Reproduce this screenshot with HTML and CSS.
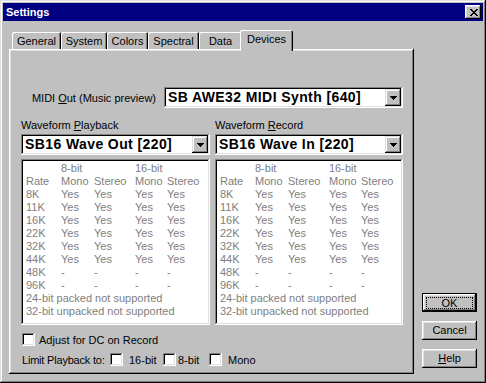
FILE: index.html
```html
<!DOCTYPE html>
<html>
<head>
<meta charset="utf-8">
<title>Settings</title>
<link rel="stylesheet" href="styles.css">
</head>
<body>
<div class="window">
  <div class="titlebar">
    <span class="title">Settings</span>
    <div class="close">
      <svg width="8" height="7" viewBox="0 0 8 7" shape-rendering="crispEdges"><path fill="#000" d="M0 0h2v1H0zM6 0h2v1H6zM1 1h2v1H1zM5 1h2v1H5zM2 2h4v1H2zM3 3h2v1H3zM2 4h4v1H2zM1 5h2v1H1zM5 5h2v1H5zM0 6h2v1H0zM6 6h2v1H6z"/></svg>
    </div>
  </div>
  <div class="content">
    <div class="tabs-area">
      <div class="tabstrip">
        <div class="tab w-general">General</div>
        <div class="tab w-system">System</div>
        <div class="tab w-colors">Colors</div>
        <div class="tab w-spectral">Spectral</div>
        <div class="tab w-data">Data</div>
        <div class="tab selected">Devices</div>
      </div>
      <div class="panel">
        <div class="midi-row">
          <span>MIDI <u>O</u>ut (Music preview)</span>
          <div class="combo midi-combo">
            <span class="combo-text">SB AWE32 MIDI Synth [640]</span>
            <span class="drop"><svg width="7" height="4" viewBox="0 0 7 4" shape-rendering="crispEdges"><path fill="#000" d="M0 0h7v1H0zM1 1h5v1H1zM2 2h3v1H2zM3 3h1v1H3z"/></svg></span>
          </div>
        </div>
        <div class="columns">
          <div class="col">
            <div class="col-label">Waveform <u>P</u>layback</div>
            <div class="combo">
              <span class="combo-text">SB16 Wave Out [220]</span>
              <span class="drop"><svg width="7" height="4" viewBox="0 0 7 4" shape-rendering="crispEdges"><path fill="#000" d="M0 0h7v1H0zM1 1h5v1H1zM2 2h3v1H2zM3 3h1v1H3z"/></svg></span>
            </div>
            <div class="caps">
              <span></span><span>8-bit</span><span></span><span>16-bit</span><span></span>
              <span>Rate</span><span>Mono</span><span>Stereo</span><span>Mono</span><span>Stereo</span>
              <span>8K</span><span>Yes</span><span>Yes</span><span>Yes</span><span>Yes</span>
              <span>11K</span><span>Yes</span><span>Yes</span><span>Yes</span><span>Yes</span>
              <span>16K</span><span>Yes</span><span>Yes</span><span>Yes</span><span>Yes</span>
              <span>22K</span><span>Yes</span><span>Yes</span><span>Yes</span><span>Yes</span>
              <span>32K</span><span>Yes</span><span>Yes</span><span>Yes</span><span>Yes</span>
              <span>44K</span><span>Yes</span><span>Yes</span><span>Yes</span><span>Yes</span>
              <span>48K</span><span>-</span><span>-</span><span>-</span><span>-</span>
              <span>96K</span><span>-</span><span>-</span><span>-</span><span>-</span>
              <span class="span-all">24-bit packed not supported</span>
              <span class="span-all">32-bit unpacked not supported</span>
            </div>
          </div>
          <div class="col">
            <div class="col-label">Waveform <u>R</u>ecord</div>
            <div class="combo">
              <span class="combo-text">SB16 Wave In [220]</span>
              <span class="drop"><svg width="7" height="4" viewBox="0 0 7 4" shape-rendering="crispEdges"><path fill="#000" d="M0 0h7v1H0zM1 1h5v1H1zM2 2h3v1H2zM3 3h1v1H3z"/></svg></span>
            </div>
            <div class="caps">
              <span></span><span>8-bit</span><span></span><span>16-bit</span><span></span>
              <span>Rate</span><span>Mono</span><span>Stereo</span><span>Mono</span><span>Stereo</span>
              <span>8K</span><span>Yes</span><span>Yes</span><span>Yes</span><span>Yes</span>
              <span>11K</span><span>Yes</span><span>Yes</span><span>Yes</span><span>Yes</span>
              <span>16K</span><span>Yes</span><span>Yes</span><span>Yes</span><span>Yes</span>
              <span>22K</span><span>Yes</span><span>Yes</span><span>Yes</span><span>Yes</span>
              <span>32K</span><span>Yes</span><span>Yes</span><span>Yes</span><span>Yes</span>
              <span>44K</span><span>Yes</span><span>Yes</span><span>Yes</span><span>Yes</span>
              <span>48K</span><span>-</span><span>-</span><span>-</span><span>-</span>
              <span>96K</span><span>-</span><span>-</span><span>-</span><span>-</span>
              <span class="span-all">24-bit packed not supported</span>
              <span class="span-all">32-bit unpacked not supported</span>
            </div>
          </div>
        </div>
        <div class="check-row first">
          <span class="checkbox"></span><span class="t-adjust">Adjust for DC on Record</span>
        </div>
        <div class="check-row second">
          <span class="t-limit">Limit Playback to:</span>
          <span class="checkbox"></span><span class="t-16">16-bit</span>
          <span class="checkbox"></span><span class="t-8">8-bit</span>
          <span class="checkbox"></span><span class="t-mono">Mono</span>
        </div>
      </div>
    </div>
    <div class="buttons">
      <div class="btn default"><span class="focus">OK</span></div>
      <div class="btn">Cancel</div>
      <div class="btn"><span><u>H</u>elp</span></div>
    </div>
  </div>
</div>
</body>
</html>
```
FILE: styles.css
```css
html, body {
  margin: 0;
  padding: 0;
  background: #c0c0c0;
}

.window {
  width: 486px;
  height: 383px;
  box-sizing: border-box;
  padding: 3px;
  background: #c0c0c0;
  box-shadow: inset -1px -1px #000, inset 1px 1px #dfdfdf, inset -2px -2px #808080, inset 2px 2px #fff;
  font-family: "Liberation Sans", Arial, sans-serif;
  font-size: 11px;
  color: #000;
  overflow: hidden;
}

.titlebar {
  height: 18px;
  background: #000080;
  display: flex;
  align-items: center;
  justify-content: space-between;
  padding: 0 2px 0 3px;
}

.title {
  color: #fff;
  font-weight: bold;
  font-size: 11px;
  line-height: 13px;
}

.close {
  width: 16px;
  height: 14px;
  box-sizing: border-box;
  background: #c0c0c0;
  box-shadow: inset -1px -1px #000, inset 1px 1px #fff, inset -2px -2px #808080, inset 2px 2px #dfdfdf;
  display: flex;
  align-items: center;
  justify-content: center;
  padding-left: 1px;
}

.close svg, .drop svg {
  display: block;
}

.content {
  display: flex;
  margin-top: 9px;
  padding-left: 6px;
}

.tabstrip {
  display: flex;
  align-items: flex-end;
  height: 19px;
  padding-left: 3px;
}

.tab {
  box-sizing: border-box;
  height: 17px;
  padding-top: 2px;
  line-height: 14px;
  text-align: center;
  white-space: nowrap;
  background: #c0c0c0;
  border-radius: 2px 2px 0 0;
  box-shadow: inset 1px 1px #fff, inset -1px 0 #000, inset -2px 0 #808080;
}

.w-general { width: 49px; }
.w-system { width: 46px; }
.w-colors { width: 41px; }
.w-spectral { width: 51px; }
.w-data { width: 43px; }

.tab.selected {
  width: 53px;
  height: 21px;
  margin: 0 -2px -2px -2px;
  position: relative;
  z-index: 1;
}

.panel {
  width: 405px;
  height: 325px;
  box-sizing: border-box;
  padding: 38px 11px 0 12px;
  box-shadow: inset -1px -1px #000, inset 1px 1px #fff, inset -2px -2px #808080, inset 2px 2px #dfdfdf;
}

.midi-row {
  display: flex;
  justify-content: flex-end;
  align-items: center;
  gap: 8px;
  height: 21px;
}

.midi-combo {
  width: 239px;
}

.columns {
  display: grid;
  grid-template-columns: 189px 188px;
  column-gap: 5px;
  margin-top: 11px;
}

.col-label {
  height: 13px;
  line-height: 13px;
  white-space: nowrap;
}

.combo {
  height: 21px;
  box-sizing: border-box;
  background: #fff;
  box-shadow: inset -1px -1px #fff, inset 1px 1px #808080, inset -2px -2px #dfdfdf, inset 2px 2px #000;
  display: flex;
  align-items: center;
  justify-content: space-between;
  padding: 2px;
}

.col .combo {
  margin-top: 2px;
}

.combo-text {
  font-weight: bold;
  font-size: 14px;
  letter-spacing: 0.4px;
  padding-left: 2px;
  white-space: nowrap;
  line-height: 17px;
}

.drop {
  width: 16px;
  height: 17px;
  box-sizing: border-box;
  background: #c0c0c0;
  box-shadow: inset -1px -1px #000, inset 1px 1px #dfdfdf, inset -2px -2px #808080, inset 2px 2px #fff;
  display: flex;
  align-items: center;
  justify-content: center;
  flex: none;
}

.caps {
  margin-top: 4px;
  height: 166px;
  box-sizing: border-box;
  background: #fff;
  box-shadow: inset -1px -1px #fff, inset 1px 1px #808080, inset -2px -2px #dfdfdf, inset 2px 2px #000;
  padding: 3px 3px 0 5px;
  color: #808080;
  display: grid;
  grid-template-columns: 35px 33px 41px 32px 1fr;
  grid-auto-rows: 13px;
  line-height: 13px;
  white-space: nowrap;
}

.span-all {
  grid-column: 1 / -1;
}

.check-row {
  display: flex;
  align-items: center;
  height: 13px;
  padding-left: 1px;
  white-space: nowrap;
}

.check-row.first { margin-top: 8px; }
.check-row.second { margin-top: 7px; }

.checkbox {
  width: 13px;
  height: 13px;
  box-sizing: border-box;
  background: #fff;
  box-shadow: inset -1px -1px #fff, inset 1px 1px #808080, inset -2px -2px #dfdfdf, inset 2px 2px #000;
  flex: none;
}

.t-adjust { margin-left: 4px; }
.t-limit { width: 88px; letter-spacing: -0.2px; }
.t-16 { margin-left: 6px; width: 34px; }
.t-8 { margin-left: 2px; width: 31px; }
.t-mono { margin-left: 6px; }

.buttons {
  display: flex;
  flex-direction: column;
  gap: 9px;
  margin-top: 263px;
  margin-left: 8px;
}

.btn {
  width: 55px;
  height: 19px;
  box-sizing: border-box;
  background: #c0c0c0;
  box-shadow: inset -1px -1px #000, inset 1px 1px #fff, inset -2px -2px #808080, inset 2px 2px #dfdfdf;
  display: flex;
  align-items: center;
  justify-content: center;
  line-height: 13px;
}

.btn.default {
  border: 1px solid #000;
  padding: 3px 3px 2px 3px;
  align-items: stretch;
}

.focus {
  flex: 1;
  border: 1px dotted #000;
  display: flex;
  align-items: center;
  justify-content: center;
}
```
